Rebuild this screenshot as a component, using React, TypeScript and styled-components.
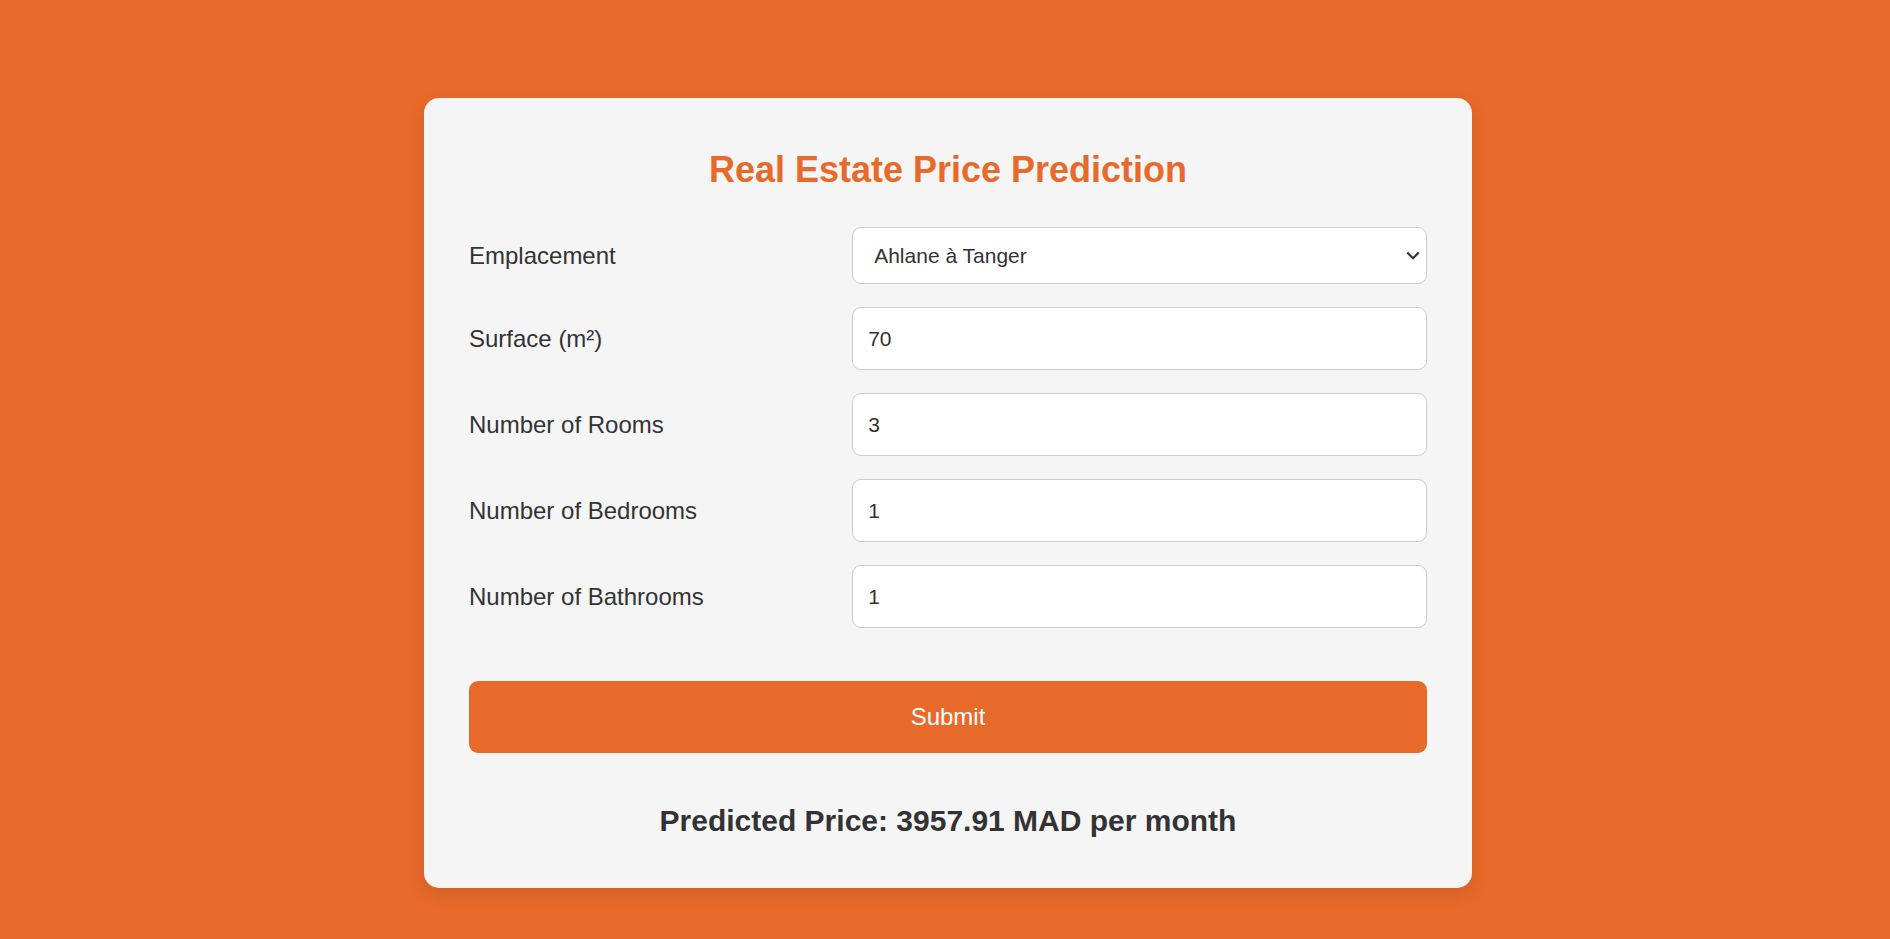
import React, { useState } from 'react';
import styled, { createGlobalStyle, css } from 'styled-components';

const GlobalStyle = createGlobalStyle`
  * { box-sizing: border-box; }
  body {
    margin: 0;
    background: #e86a2a;
    color: #333;
    font-family: Arial, "Liberation Sans", sans-serif;
  }
`;

const Page = styled.main`
  display: flex;
  justify-content: center;
  padding: 98px 20px 50px 26px;
`;

const Card = styled.section`
  width: 100%;
  max-width: 1048px;
  padding: 45px;
  border-radius: 15px;
  background: #f5f5f5;
  box-shadow: 0 6px 18px rgba(0, 0, 0, 0.1);
`;

const Title = styled.h1`
  margin: 0 0 30px;
  color: #e86a2a;
  font-size: 36px;
  line-height: 54px;
  text-align: center;
`;

const Form = styled.form`
  display: flex;
  flex-direction: column;
  gap: 23px;
`;

const Row = styled.div`
  display: grid;
  grid-template-columns: 2fr 3fr;
  align-items: center;
`;

const Label = styled.label`
  font-size: 24px;
`;

const control = css`
  width: 100%;
  border: 1px solid #ccc;
  border-radius: 9px;
  background: #fff;
  color: #333;
  font: inherit;
  font-size: 21px;
`;

const Input = styled.input`
  ${control}
  height: 63px;
  padding: 15px;
`;

const SelectWrap = styled.div`
  position: relative;
`;

const Select = styled.select`
  ${control}
  display: block;
  height: 57px;
  padding: 0 30px 0 21px;
  appearance: none;
`;

const Chevron = styled.svg`
  position: absolute;
  top: 50%;
  right: 6px;
  width: 16px;
  height: 12px;
  margin-top: -6px;
  pointer-events: none;
`;

const Submit = styled.button`
  height: 72px;
  margin-top: 30px;
  border: 0;
  border-radius: 9px;
  background: #e86a2a;
  color: #fff;
  font: inherit;
  font-size: 24px;
  cursor: pointer;
`;

const Result = styled.h2`
  margin: 45px 0 0;
  font-size: 30px;
  line-height: 45px;
  text-align: center;
`;

const initialFields = [
  { id: 'surface', label: 'Surface (m²)', value: '70' },
  { id: 'rooms', label: 'Number of Rooms', value: '3' },
  { id: 'bedrooms', label: 'Number of Bedrooms', value: '1' },
  { id: 'bathrooms', label: 'Number of Bathrooms', value: '1' },
];

export default function App() {
  const [fields, setFields] = useState(initialFields);
  const update = (id: string, value: string) =>
    setFields(fields.map((f) => (f.id === id ? { ...f, value } : f)));

  return (
    <Page>
      <GlobalStyle />
      <Card>
        <Title>Real Estate Price Prediction</Title>
        <Form onSubmit={(e) => e.preventDefault()}>
          <Row>
            <Label htmlFor="location">Emplacement</Label>
            <SelectWrap>
              <Select id="location">
                <option>Ahlane à Tanger</option>
              </Select>
              <Chevron viewBox="0 0 16 12" aria-hidden="true">
                <path
                  d="M2.3 2.6 L8 8.3 L13.7 2.6"
                  fill="none"
                  stroke="#333"
                  strokeWidth="2.1"
                />
              </Chevron>
            </SelectWrap>
          </Row>
          {fields.map((f) => (
            <Row key={f.id}>
              <Label htmlFor={f.id}>{f.label}</Label>
              <Input
                id={f.id}
                type="number"
                value={f.value}
                onChange={(e) => update(f.id, e.target.value)}
              />
            </Row>
          ))}
          <Submit type="submit">Submit</Submit>
        </Form>
        <Result>Predicted Price: 3957.91 MAD per month</Result>
      </Card>
    </Page>
  );
}
